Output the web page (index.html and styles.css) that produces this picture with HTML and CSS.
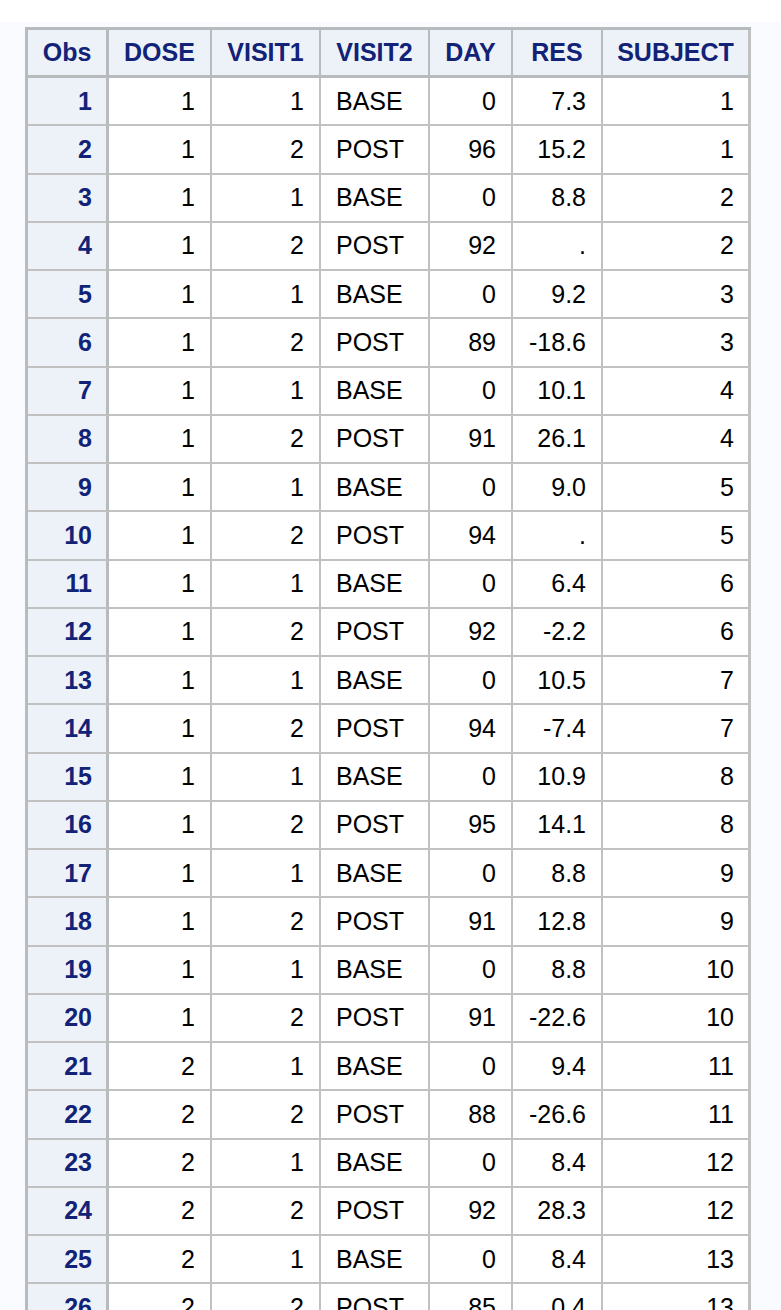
FILE: index.html
```html
<!DOCTYPE html>
<html lang="en">
<head>
<meta charset="utf-8">
<title>SAS Output</title>
<link rel="stylesheet" href="styles.css">
</head>
<body>
<div class="topbar"></div>
<main class="page">
<table class="table">
<colgroup>
<col class="c-obs"><col class="c-dose"><col class="c-v1"><col class="c-v2"><col class="c-day"><col class="c-res"><col class="c-subj">
</colgroup>
<thead>
<tr><th class="obs">Obs</th><th>DOSE</th><th>VISIT1</th><th>VISIT2</th><th>DAY</th><th>RES</th><th class="last">SUBJECT</th></tr>
</thead>
<tbody>
<tr><th class="rowh">1</th><td>1</td><td>1</td><td class="l">BASE</td><td>0</td><td>7.3</td><td class="last">1</td></tr>
<tr><th class="rowh">2</th><td>1</td><td>2</td><td class="l">POST</td><td>96</td><td>15.2</td><td class="last">1</td></tr>
<tr><th class="rowh">3</th><td>1</td><td>1</td><td class="l">BASE</td><td>0</td><td>8.8</td><td class="last">2</td></tr>
<tr><th class="rowh">4</th><td>1</td><td>2</td><td class="l">POST</td><td>92</td><td>.</td><td class="last">2</td></tr>
<tr><th class="rowh">5</th><td>1</td><td>1</td><td class="l">BASE</td><td>0</td><td>9.2</td><td class="last">3</td></tr>
<tr><th class="rowh">6</th><td>1</td><td>2</td><td class="l">POST</td><td>89</td><td>-18.6</td><td class="last">3</td></tr>
<tr><th class="rowh">7</th><td>1</td><td>1</td><td class="l">BASE</td><td>0</td><td>10.1</td><td class="last">4</td></tr>
<tr><th class="rowh">8</th><td>1</td><td>2</td><td class="l">POST</td><td>91</td><td>26.1</td><td class="last">4</td></tr>
<tr><th class="rowh">9</th><td>1</td><td>1</td><td class="l">BASE</td><td>0</td><td>9.0</td><td class="last">5</td></tr>
<tr><th class="rowh">10</th><td>1</td><td>2</td><td class="l">POST</td><td>94</td><td>.</td><td class="last">5</td></tr>
<tr><th class="rowh">11</th><td>1</td><td>1</td><td class="l">BASE</td><td>0</td><td>6.4</td><td class="last">6</td></tr>
<tr><th class="rowh">12</th><td>1</td><td>2</td><td class="l">POST</td><td>92</td><td>-2.2</td><td class="last">6</td></tr>
<tr><th class="rowh">13</th><td>1</td><td>1</td><td class="l">BASE</td><td>0</td><td>10.5</td><td class="last">7</td></tr>
<tr><th class="rowh">14</th><td>1</td><td>2</td><td class="l">POST</td><td>94</td><td>-7.4</td><td class="last">7</td></tr>
<tr><th class="rowh">15</th><td>1</td><td>1</td><td class="l">BASE</td><td>0</td><td>10.9</td><td class="last">8</td></tr>
<tr><th class="rowh">16</th><td>1</td><td>2</td><td class="l">POST</td><td>95</td><td>14.1</td><td class="last">8</td></tr>
<tr><th class="rowh">17</th><td>1</td><td>1</td><td class="l">BASE</td><td>0</td><td>8.8</td><td class="last">9</td></tr>
<tr><th class="rowh">18</th><td>1</td><td>2</td><td class="l">POST</td><td>91</td><td>12.8</td><td class="last">9</td></tr>
<tr><th class="rowh">19</th><td>1</td><td>1</td><td class="l">BASE</td><td>0</td><td>8.8</td><td class="last">10</td></tr>
<tr><th class="rowh">20</th><td>1</td><td>2</td><td class="l">POST</td><td>91</td><td>-22.6</td><td class="last">10</td></tr>
<tr><th class="rowh">21</th><td>2</td><td>1</td><td class="l">BASE</td><td>0</td><td>9.4</td><td class="last">11</td></tr>
<tr><th class="rowh">22</th><td>2</td><td>2</td><td class="l">POST</td><td>88</td><td>-26.6</td><td class="last">11</td></tr>
<tr><th class="rowh">23</th><td>2</td><td>1</td><td class="l">BASE</td><td>0</td><td>8.4</td><td class="last">12</td></tr>
<tr><th class="rowh">24</th><td>2</td><td>2</td><td class="l">POST</td><td>92</td><td>28.3</td><td class="last">12</td></tr>
<tr><th class="rowh">25</th><td>2</td><td>1</td><td class="l">BASE</td><td>0</td><td>8.4</td><td class="last">13</td></tr>
<tr><th class="rowh">26</th><td>2</td><td>2</td><td class="l">POST</td><td>85</td><td>0.4</td><td class="last">13</td></tr>
</tbody>
</table>
</main>
</body>
</html>
```
FILE: styles.css
```css
html, body {
  margin: 0;
  padding: 0;
  background: #ffffff;
}

.topbar {
  height: 22px;
  background: #ffffff;
}

.page {
  background: #fafbfe;
  padding: 5px 0 40px 25px;
  font-family: "Liberation Sans", Arial, sans-serif;
  font-size: 25px;
}

.table {
  border-collapse: separate;
  border-spacing: 0;
  table-layout: fixed;
  width: 726px;
  border-top: 3px solid #b7bbbe;
  border-left: 3px solid #b7bbbe;
}

.c-obs { width: 81px; }
.c-dose { width: 103px; }
.c-v1 { width: 109px; }
.c-v2 { width: 109px; }
.c-day { width: 83px; }
.c-res { width: 90px; }
.c-subj { width: 148px; }

.table th,
.table td {
  box-sizing: border-box;
  padding: 0 15px 0 15px;
  line-height: 1;
  white-space: nowrap;
}

.table thead th {
  height: 48px;
  background: #edf2f9;
  color: #112277;
  font-weight: bold;
  text-align: center;
  padding: 0 6px;
  border-right: 2px solid #b7bbbe;
  border-bottom: 3px solid #b7bbbe;
}

.table thead th.obs {
  border-right-width: 3px;
}

.table thead th.last {
  border-right: 3px solid #c1c1c1;
}

.table tbody tr {
  height: 48.25px;
}

.table tbody th.rowh {
  background: #edf2f9;
  color: #112277;
  font-weight: bold;
  text-align: right;
  padding-right: 14px;
  border-right: 3px solid #b7bbbe;
  border-bottom: 2px solid #c1c1c1;
}

.table tbody td {
  background: #ffffff;
  color: #000000;
  text-align: right;
  border-right: 2px solid #c1c1c1;
  border-bottom: 2px solid #c1c1c1;
}

.table tbody td.l {
  text-align: left;
}

.table tbody td.last {
  border-right-width: 3px;
  padding-right: 14px;
}
```
